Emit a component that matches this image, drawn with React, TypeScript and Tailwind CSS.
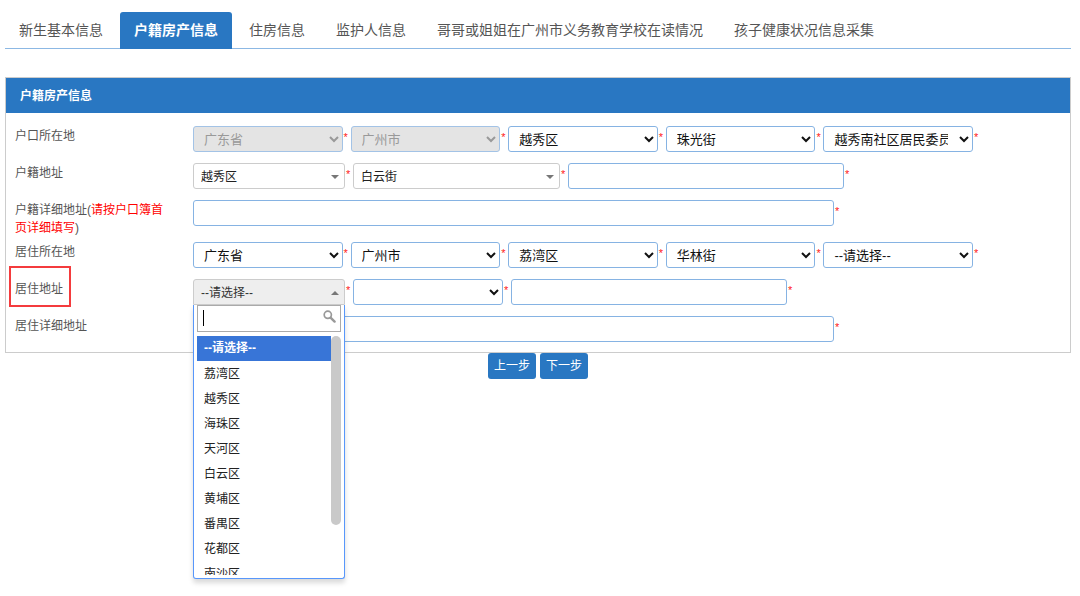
import React, { useState } from "react";

const tabs = [
  "新生基本信息",
  "户籍房产信息",
  "住房信息",
  "监护人信息",
  "哥哥或姐姐在广州市义务教育学校在读情况",
  "孩子健康状况信息采集",
];

const districts = [
  "--请选择--",
  "荔湾区",
  "越秀区",
  "海珠区",
  "天河区",
  "白云区",
  "黄埔区",
  "番禺区",
  "花都区",
  "南沙区",
];

const Required = () => (
  <span className="w-2 shrink-0 pl-px text-[11px] leading-[22px] text-[#ff2020]">*</span>
);

const Row = ({
  label,
  htmlFor,
  children,
}: {
  label: React.ReactNode;
  htmlFor: string;
  children: React.ReactNode;
}) => (
  <div className="flex min-h-[37px] items-start last:min-h-9">
    <div className="w-[178px] shrink-0 pb-[5px] pr-5 pt-px leading-[18px]">
      <label htmlFor={htmlFor}>{label}</label>
    </div>
    <div className="flex min-w-0 flex-1">{children}</div>
  </div>
);

const NativeSelect = ({
  id,
  name,
  options,
  disabled,
}: {
  id?: string;
  name: string;
  options: string[];
  disabled?: boolean;
}) => (
  <select
    id={id}
    aria-label={name}
    disabled={disabled}
    className="h-[26px] w-full min-w-0 rounded-[3px] border border-[#86b3e3] bg-white pl-[6px] pr-2 text-[13px] text-[#111] disabled:border-[#a3c3e6] disabled:bg-[#e4e4e4] disabled:text-[#999] disabled:opacity-100"
  >
    {options.map((o) => (
      <option key={o}>{o}</option>
    ))}
  </select>
);

const RegionSelects = ({
  id,
  values,
  locked,
}: {
  id: string;
  values: string[];
  locked: number;
}) => {
  const names = ["省", "市", "区", "街道", "居委会"];
  return (
    <div className="grid w-full max-w-[788px] grid-cols-5">
      {values.map((v, i) => (
        <div key={names[i]} className="flex">
          <NativeSelect
            id={i === 0 ? id : undefined}
            name={names[i]}
            options={[v]}
            disabled={i < locked}
          />
          <Required />
        </div>
      ))}
    </div>
  );
};

const Arrow = ({ up }: { up?: boolean }) => (
  <svg
    width="8"
    height="4"
    viewBox="0 0 8 4"
    className="pointer-events-none absolute right-[6px] top-3"
    fill="#777"
    aria-hidden="true"
  >
    <path d={up ? "M0 4h8L4 0z" : "M0 0h8L4 4z"} />
  </svg>
);

const inputClass =
  "h-[26px] min-w-0 rounded-[3px] border border-[#86b3e3] bg-white px-2 text-xs outline-none";

const boxSelectClass =
  "h-[26px] w-full appearance-none rounded-[3px] border border-[#ccc] bg-white px-[7px] pt-px text-xs text-[#222]";

const DistrictPicker = () => {
  const [open, setOpen] = useState(true);
  const [keyword, setKeyword] = useState("");
  const [selected, setSelected] = useState(districts[0]);

  return (
    <div className="relative w-[152px] shrink-0">
      <button
        id="liveAddress"
        type="button"
        aria-haspopup="listbox"
        aria-expanded={open}
        onClick={() => setOpen(!open)}
        className="block h-[26px] w-full rounded-t-[3px] border border-[#ccc] bg-[#eee] px-[7px] pt-px text-left text-xs text-[#333]"
      >
        {selected}
      </button>
      <Arrow up={open} />
      {open && (
        <div className="absolute left-0 top-[26px] z-10 w-full rounded-b-[3px] border border-t-0 border-[#5897fb] bg-white px-[3px] pb-[3px] shadow-[0_4px_5px_rgba(0,0,0,0.15)]">
          <div className="relative">
            <input
              type="text"
              aria-label="搜索"
              value={keyword}
              onChange={(e) => setKeyword(e.target.value)}
              className="block h-[27px] w-full border border-[#aaa] bg-white pl-[6px] pr-5 text-xs caret-transparent outline-none"
            />
            <span className="absolute left-[6px] top-[5px] h-4 w-px bg-black" />
            <svg
              width="13"
              height="13"
              viewBox="0 0 13 13"
              className="absolute right-[5px] top-[5px]"
              fill="none"
              stroke="#999"
              aria-hidden="true"
            >
              <circle cx="4.8" cy="4.8" r="3.6" strokeWidth="1.7" />
              <path d="M7.8 7.8l3.8 3.8" strokeWidth="2.4" strokeLinecap="round" />
            </svg>
          </div>
          <div className="mt-1 flex h-[239px] overflow-hidden">
            <ul role="listbox" aria-label="居住地址" className="flex-1">
              {districts
                .filter((d) => d.includes(keyword))
                .map((d) => (
                  <li
                    key={d}
                    role="option"
                    aria-selected={d === selected}
                    onClick={() => setSelected(d)}
                    className={
                      d === selected
                        ? "h-[25px] bg-[#3875d7] pl-[7px] font-bold leading-[25px] text-white"
                        : "h-[25px] pl-[7px] leading-[27px] text-[#222]"
                    }
                  >
                    {d}
                  </li>
                ))}
            </ul>
            <div className="h-[189px] w-[10px] rounded-full bg-[#c9c9c9]" />
          </div>
        </div>
      )}
    </div>
  );
};

const stepClass = "h-[26px] rounded-[3px] bg-[#2977c2] px-[6px] text-xs text-white";

const App = () => {
  return (
    <main className="min-h-screen bg-white pb-4 pl-[5px] pr-[9px] pt-3 font-['Liberation_Sans','Noto_Sans_CJK_SC',sans-serif] text-xs text-[#555]">
      <nav className="flex gap-[3px] border-b border-[#8cb8e4]">
        {tabs.map((tab, i) => (
          <a
            key={tab}
            href="#"
            className={
              i === 1
                ? "-mb-px h-[37px] whitespace-nowrap rounded-t-[3px] bg-[#2977c2] px-[14px] text-sm font-bold leading-9 text-white"
                : "h-9 whitespace-nowrap px-[14px] text-sm leading-9 text-[#555]"
            }
          >
            {tab}
          </a>
        ))}
      </nav>

      <form onSubmit={(e) => e.preventDefault()}>
        <section className="mt-7 border border-[#ccc]">
          <h2 className="h-[35px] bg-[#2977c2] px-[14px] text-xs font-bold leading-[37px] text-white">
            户籍房产信息
          </h2>

          <div className="pl-[9px] pt-[13px]">
            <Row label="户口所在地" htmlFor="hukouRegion">
              <RegionSelects
                id="hukouRegion"
                values={["广东省", "广州市", "越秀区", "珠光街", "越秀南社区居民委员会"]}
                locked={2}
              />
            </Row>

            <Row label="户籍地址" htmlFor="hukouAddress">
              <div className="relative w-[152px] shrink-0">
                <select id="hukouAddress" className={boxSelectClass}>
                  <option>越秀区</option>
                </select>
                <Arrow />
              </div>
              <Required />
              <div className="relative w-[207px] shrink-0">
                <select aria-label="街道" className={boxSelectClass}>
                  <option>白云街</option>
                </select>
                <Arrow />
              </div>
              <Required />
              <input type="text" aria-label="路名" className={`${inputClass} w-[276px]`} />
              <Required />
            </Row>

            <Row
              label={
                <>
                  户籍详细地址(<span className="text-[#ff0000]">请按户口簿首页详细填写</span>)
                </>
              }
              htmlFor="hukouDetail"
            >
              <input id="hukouDetail" type="text" className={`${inputClass} w-[641px]`} />
              <Required />
            </Row>

            <Row label="居住所在地" htmlFor="liveRegion">
              <RegionSelects
                id="liveRegion"
                values={["广东省", "广州市", "荔湾区", "华林街", "--请选择--"]}
                locked={0}
              />
            </Row>

            <Row
              label={
                <span className="relative inline-block">
                  居住地址
                  <span className="absolute -bottom-[9px] -left-[6px] -right-2 -top-[14px] border-2 border-[#f43b3d]" />
                </span>
              }
              htmlFor="liveAddress"
            >
              <DistrictPicker />
              <Required />
              <div className="w-[150px] shrink-0">
                <NativeSelect name="街道" options={[""]} />
              </div>
              <Required />
              <input type="text" aria-label="路名" className={`${inputClass} w-[276px]`} />
              <Required />
            </Row>

            <Row label="居住详细地址" htmlFor="liveDetail">
              <input id="liveDetail" type="text" className={`${inputClass} w-[641px]`} />
              <Required />
            </Row>
          </div>
        </section>

        <div className="flex justify-center gap-1">
          <button type="button" className={stepClass}>
            上一步
          </button>
          <button type="submit" className={stepClass}>
            下一步
          </button>
        </div>
      </form>
    </main>
  );
};

export default App;
